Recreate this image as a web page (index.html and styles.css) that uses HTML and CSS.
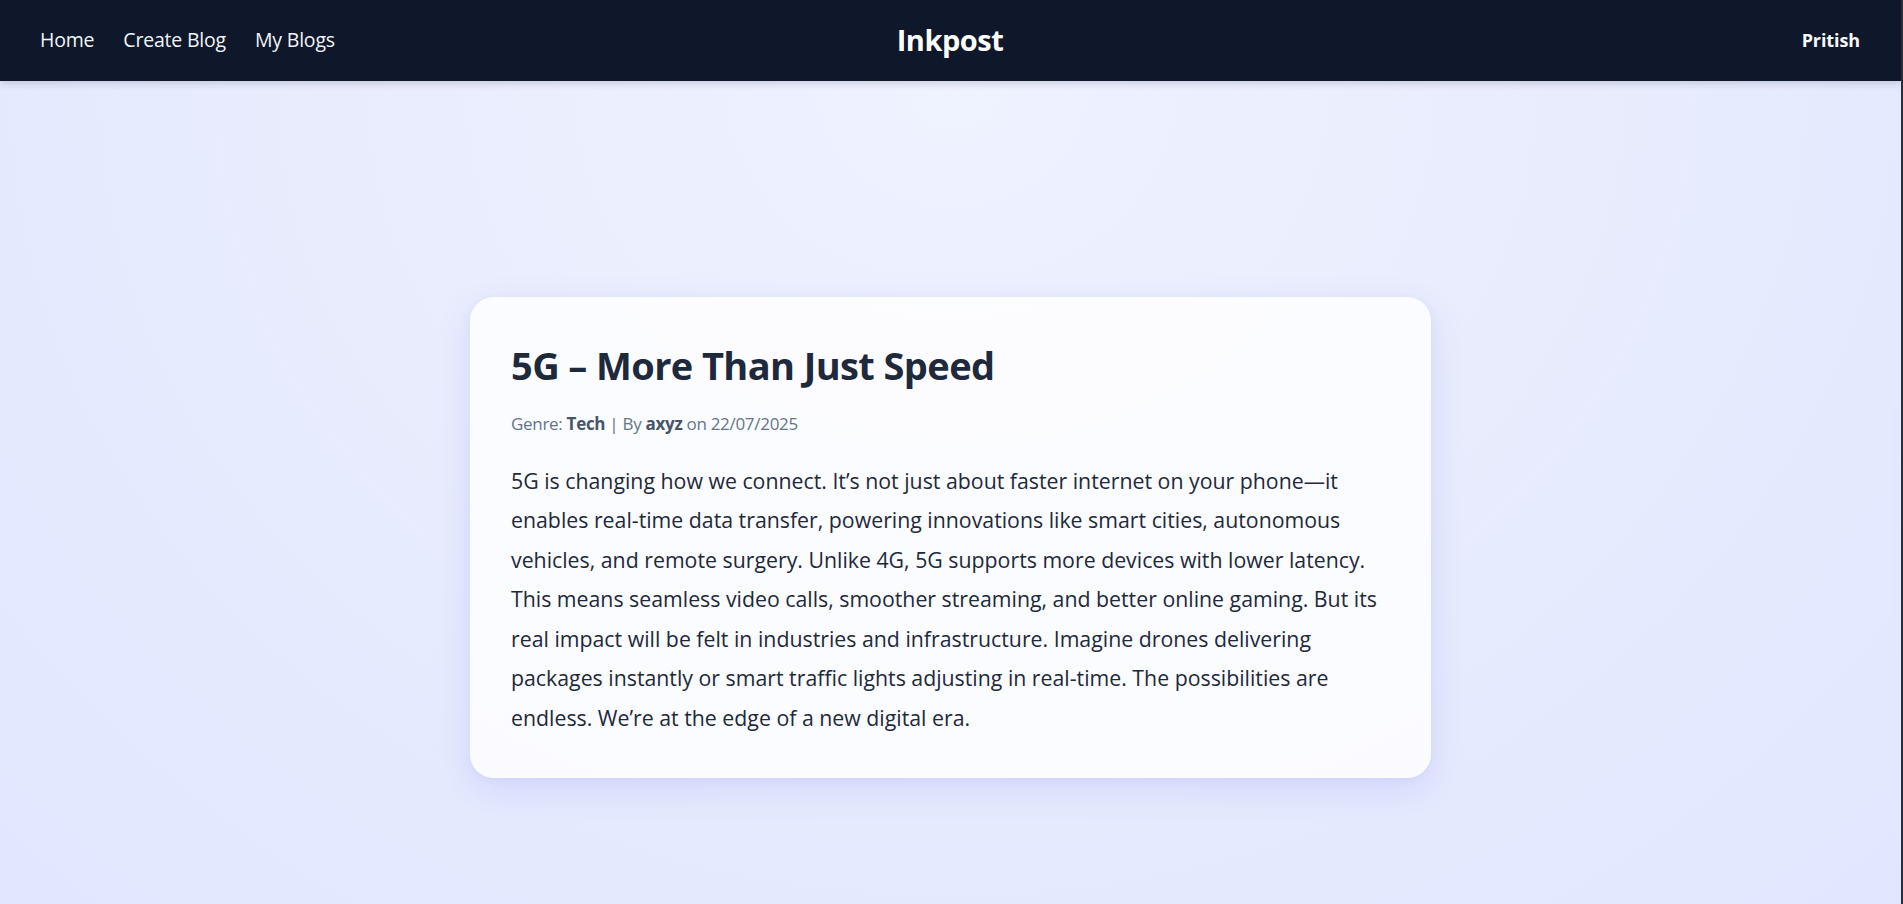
FILE: index.html
```html
<!DOCTYPE html>
<html lang="en">
<head>
<meta charset="utf-8">
<title>Inkpost</title>
<link rel="stylesheet" href="styles.css">
</head>
<body>
<nav class="navbar">
  <div class="nav-links">
    <a class="nav-link" href="#">Home</a>
    <a class="nav-link" href="#">Create Blog</a>
    <a class="nav-link" href="#">My Blogs</a>
  </div>
  <div class="brand">Inkpost</div>
  <div class="nav-user">Pritish</div>
</nav>
<main class="page">
  <article class="card">
    <h1 class="title">5G – More Than Just Speed</h1>
    <p class="meta">Genre: <strong>Tech</strong> | By <strong>axyz</strong> on 22/07/2025</p>
    <p class="content">5G is changing how we connect. It’s not just about faster internet on your phone—it enables real-time data transfer, powering innovations like smart cities, autonomous vehicles, and remote surgery. Unlike 4G, 5G supports more devices with lower latency. This means seamless video calls, smoother streaming, and better online gaming. But its real impact will be felt in industries and infrastructure. Imagine drones delivering packages instantly or smart traffic lights adjusting in real-time. The possibilities are endless. We’re at the edge of a new digital era.</p>
  </article>
</main>
</body>
</html>
```

FILE: styles.css
```css
* { box-sizing: border-box; }
html, body { margin: 0; padding: 0; height: 100%; }
body {
  font-family: "Open Sans", "Noto Sans", "Liberation Sans", sans-serif;
  background: radial-gradient(ellipse at 50% 10%, #eff2ff 0%, #e9edfd 40%, #e0e7ff 100%);
  overflow: hidden;
  border-right: 2px solid #2a2d3a;
}
.navbar {
  height: 81px;
  background: #0f172a;
  display: grid;
  grid-template-columns: 1fr auto 1fr;
  align-items: center;
  padding: 0 41px 2px 40px;
  box-shadow: 0 2px 8px rgba(15, 23, 42, 0.18);
  position: relative;
  z-index: 1;
}
.nav-links { display: flex; gap: 29px; }
.nav-link {
  color: #f1f5f9;
  text-decoration: none;
  font-size: 19.5px;
  letter-spacing: -0.2px;
}
.brand {
  color: #ffffff;
  font-size: 29px;
  font-weight: 700;
  letter-spacing: -0.5px;
}
.nav-user {
  justify-self: end;
  color: #f8fafc;
  font-size: 18px;
  font-weight: 700;
  letter-spacing: -0.1px;
}
.page {
  display: flex;
  justify-content: center;
  padding-top: 216px;
}
.card {
  width: 961px;
  background: rgba(255, 255, 255, 0.82);
  border-radius: 24px;
  padding: 46px 36px 41px 41px;
  box-shadow: 0 12px 36px rgba(79, 70, 229, 0.12), 0 2px 8px rgba(79, 70, 229, 0.05);
}
.title {
  margin: 0;
  color: #1e293b;
  font-size: 38px;
  font-weight: 700;
  line-height: 1.2;
  letter-spacing: -0.6px;
}
.meta {
  margin: 23px 0 0;
  color: #64748b;
  font-size: 17px;
  letter-spacing: -0.3px;
}
.meta strong { color: #475569; font-weight: 700; }
.content {
  margin: 26px 0 0;
  color: #1e293b;
  font-size: 21.3px;
  line-height: 39.5px;
  letter-spacing: 0;
}
```
